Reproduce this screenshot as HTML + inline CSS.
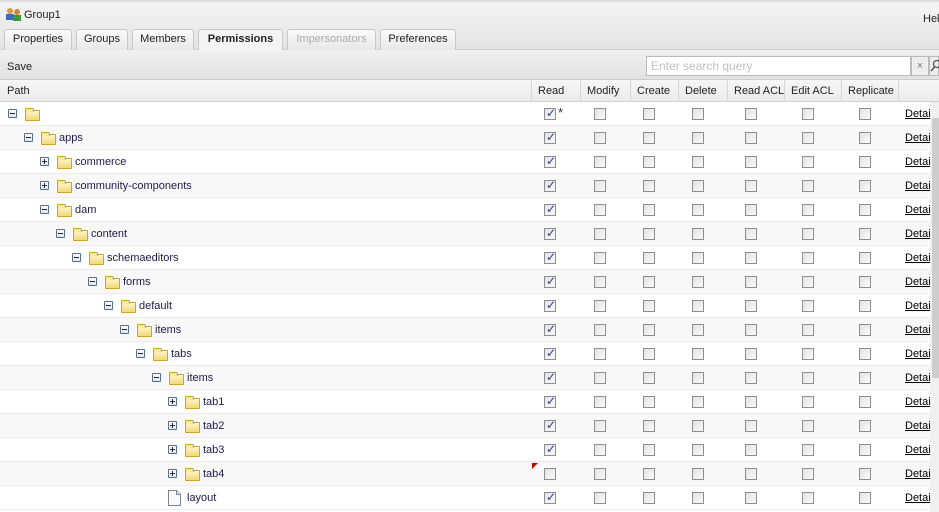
<!DOCTYPE html>
<html><head><meta charset="utf-8"><style>
*{box-sizing:border-box;margin:0;padding:0}
body{width:939px;height:512px;overflow:hidden;background:#fff;font-family:"Liberation Sans","DejaVu Sans",sans-serif;font-size:11px;color:#222;position:relative}
.abs{position:absolute}
#top{left:0;top:0;width:939px;height:50px;background:linear-gradient(#f4f4f4,#e4e4e4);border-top:2px solid #ddd;border-bottom:1px solid #d0d0d0}
.tab{position:absolute;top:29px;height:21px;border:1px solid #c8c8c8;border-bottom:none;border-radius:3px 3px 0 0;background:linear-gradient(#fafafa,#e8e8e8);text-align:center;line-height:19px;font-size:11px;color:#222}
#tb{left:0;top:50px;width:939px;height:30px;background:linear-gradient(#f0f0f0,#e2e2e2);border-bottom:1px solid #ccc}
#hdr{left:0;top:80px;width:939px;height:22px;background:linear-gradient(#f6f6f6,#ebebeb);border-bottom:1px solid #d0d0d0}
.hc{position:absolute;top:0;height:22px;line-height:22px;border-left:1px solid #d6d6d6;padding-left:6px;font-size:11px;color:#222}
.row{position:absolute;left:0;width:930px;height:24px;border-bottom:1px solid #ececec}
.row.g{background:#f8f8f8}
.ex{position:absolute;top:7px;width:9px;height:9px;border:1px solid #56708a;background:linear-gradient(#fff,#dfe6ee);border-radius:1px}
.ex:before{content:"";position:absolute;left:1px;top:3px;width:5px;height:1px;background:#223}
.ex.p:after{content:"";position:absolute;left:3px;top:1px;width:1px;height:5px;background:#223}
.fd{position:absolute;top:8px;width:15px;height:11px;border:1px solid #c9a23a;border-radius:1px;background:linear-gradient(#fff6c8,#f3d877)}
.fd:before{content:"";position:absolute;left:-1px;top:-3px;width:7px;height:3px;border:1px solid #c9a23a;border-bottom:none;border-radius:2px 2px 0 0;background:#fbeaa4}
.tx{position:absolute;top:6px;color:#1e1a4a;font-size:11px}
.cb{position:absolute;top:6px;width:12px;height:12px;border:1px solid #8e8e8e;background:linear-gradient(135deg,#e2e2e2,#fafafa)}
.ck:after{content:"✓";position:absolute;left:1px;top:-3px;font-size:12px;font-weight:bold;color:#2a3f8f}
.dt{position:absolute;left:905px;top:6px;text-decoration:underline;color:#000;font-size:11px}
</style></head><body>
<div id="top" class="abs"></div>
<svg class="abs" style="left:5px;top:7px" width="17" height="14"><circle cx="5" cy="4" r="3" fill="#d89a4a"/><rect x="1" y="7" width="8" height="6" fill="#3a6cc0"/><circle cx="12" cy="5" r="3" fill="#c98a40"/><rect x="8" y="8" width="8" height="6" fill="#3a9a3a"/></svg>
<div class="abs" style="left:24px;top:9px;font-size:11px">Group1</div>
<div class="abs" style="left:923px;top:13px;font-size:11px">Hel</div>
<div class="tab" style="left:4px;width:68px">Properties</div>
<div class="tab" style="left:76px;width:52px">Groups</div>
<div class="tab" style="left:132px;width:62px">Members</div>
<div class="tab" style="left:198px;width:85px;background:#f4f4f4;font-weight:bold;height:22px">Permissions</div>
<div class="tab" style="left:287px;width:89px;color:#aaa">Impersonators</div>
<div class="tab" style="left:380px;width:76px">Preferences</div>
<div id="tb" class="abs"></div>
<div class="abs" style="left:7px;top:61px">Save</div>
<div class="abs" style="left:646px;top:56px;width:265px;height:20px;border:1px solid #bbb;background:#fff;color:#c0c0c0;font-size:12px;padding:2px 4px">Enter search query</div>
<div class="abs" style="left:911px;top:56px;width:18px;height:20px;border:1px solid #bbb;background:#eee;text-align:center;color:#777;line-height:18px">×</div>
<div class="abs" style="left:929px;top:56px;width:10px;height:20px;border:1px solid #bbb;background:#eee"></div>
<svg class="abs" style="left:930px;top:59px" width="9" height="14"><circle cx="7" cy="5" r="3.5" fill="none" stroke="#555" stroke-width="1.3"/><line x1="4.5" y1="8" x2="1" y2="12" stroke="#555" stroke-width="1.6"/></svg>
<div id="hdr" class="abs">
<div class="hc" style="left:0;border:none;padding-left:7px">Path</div>
<div class="hc" style="left:531px">Read</div>
<div class="hc" style="left:580px">Modify</div>
<div class="hc" style="left:630px">Create</div>
<div class="hc" style="left:678px">Delete</div>
<div class="hc" style="left:727px">Read ACL</div>
<div class="hc" style="left:784px">Edit ACL</div>
<div class="hc" style="left:841px">Replicate</div>
<div class="hc" style="left:898px"></div>
</div>

<div class="row" style="top:102px"><i class="ex" style="left:8px"></i><i class="fd" style="left:25px"></i><i class="cb ck" style="left:544px"></i><span class="abs" style="left:558px;top:3px;font-size:13px;color:#334">*</span><i class="cb" style="left:594px"></i><i class="cb" style="left:643px"></i><i class="cb" style="left:692px"></i><i class="cb" style="left:745px"></i><i class="cb" style="left:802px"></i><i class="cb" style="left:859px"></i><u class="dt">Detai</u></div>
<div class="row g" style="top:126px"><i class="ex" style="left:24px"></i><i class="fd" style="left:41px"></i><span class="tx" style="left:59px">apps</span><i class="cb ck" style="left:544px"></i><i class="cb" style="left:594px"></i><i class="cb" style="left:643px"></i><i class="cb" style="left:692px"></i><i class="cb" style="left:745px"></i><i class="cb" style="left:802px"></i><i class="cb" style="left:859px"></i><u class="dt">Detai</u></div>
<div class="row" style="top:150px"><i class="ex p" style="left:40px"></i><i class="fd" style="left:57px"></i><span class="tx" style="left:75px">commerce</span><i class="cb ck" style="left:544px"></i><i class="cb" style="left:594px"></i><i class="cb" style="left:643px"></i><i class="cb" style="left:692px"></i><i class="cb" style="left:745px"></i><i class="cb" style="left:802px"></i><i class="cb" style="left:859px"></i><u class="dt">Detai</u></div>
<div class="row g" style="top:174px"><i class="ex p" style="left:40px"></i><i class="fd" style="left:57px"></i><span class="tx" style="left:75px">community-components</span><i class="cb ck" style="left:544px"></i><i class="cb" style="left:594px"></i><i class="cb" style="left:643px"></i><i class="cb" style="left:692px"></i><i class="cb" style="left:745px"></i><i class="cb" style="left:802px"></i><i class="cb" style="left:859px"></i><u class="dt">Detai</u></div>
<div class="row" style="top:198px"><i class="ex" style="left:40px"></i><i class="fd" style="left:57px"></i><span class="tx" style="left:75px">dam</span><i class="cb ck" style="left:544px"></i><i class="cb" style="left:594px"></i><i class="cb" style="left:643px"></i><i class="cb" style="left:692px"></i><i class="cb" style="left:745px"></i><i class="cb" style="left:802px"></i><i class="cb" style="left:859px"></i><u class="dt">Detai</u></div>
<div class="row g" style="top:222px"><i class="ex" style="left:56px"></i><i class="fd" style="left:73px"></i><span class="tx" style="left:91px">content</span><i class="cb ck" style="left:544px"></i><i class="cb" style="left:594px"></i><i class="cb" style="left:643px"></i><i class="cb" style="left:692px"></i><i class="cb" style="left:745px"></i><i class="cb" style="left:802px"></i><i class="cb" style="left:859px"></i><u class="dt">Detai</u></div>
<div class="row" style="top:246px"><i class="ex" style="left:72px"></i><i class="fd" style="left:89px"></i><span class="tx" style="left:107px">schemaeditors</span><i class="cb ck" style="left:544px"></i><i class="cb" style="left:594px"></i><i class="cb" style="left:643px"></i><i class="cb" style="left:692px"></i><i class="cb" style="left:745px"></i><i class="cb" style="left:802px"></i><i class="cb" style="left:859px"></i><u class="dt">Detai</u></div>
<div class="row g" style="top:270px"><i class="ex" style="left:88px"></i><i class="fd" style="left:105px"></i><span class="tx" style="left:123px">forms</span><i class="cb ck" style="left:544px"></i><i class="cb" style="left:594px"></i><i class="cb" style="left:643px"></i><i class="cb" style="left:692px"></i><i class="cb" style="left:745px"></i><i class="cb" style="left:802px"></i><i class="cb" style="left:859px"></i><u class="dt">Detai</u></div>
<div class="row" style="top:294px"><i class="ex" style="left:104px"></i><i class="fd" style="left:121px"></i><span class="tx" style="left:139px">default</span><i class="cb ck" style="left:544px"></i><i class="cb" style="left:594px"></i><i class="cb" style="left:643px"></i><i class="cb" style="left:692px"></i><i class="cb" style="left:745px"></i><i class="cb" style="left:802px"></i><i class="cb" style="left:859px"></i><u class="dt">Detai</u></div>
<div class="row g" style="top:318px"><i class="ex" style="left:120px"></i><i class="fd" style="left:137px"></i><span class="tx" style="left:155px">items</span><i class="cb ck" style="left:544px"></i><i class="cb" style="left:594px"></i><i class="cb" style="left:643px"></i><i class="cb" style="left:692px"></i><i class="cb" style="left:745px"></i><i class="cb" style="left:802px"></i><i class="cb" style="left:859px"></i><u class="dt">Detai</u></div>
<div class="row" style="top:342px"><i class="ex" style="left:136px"></i><i class="fd" style="left:153px"></i><span class="tx" style="left:171px">tabs</span><i class="cb ck" style="left:544px"></i><i class="cb" style="left:594px"></i><i class="cb" style="left:643px"></i><i class="cb" style="left:692px"></i><i class="cb" style="left:745px"></i><i class="cb" style="left:802px"></i><i class="cb" style="left:859px"></i><u class="dt">Detai</u></div>
<div class="row g" style="top:366px"><i class="ex" style="left:152px"></i><i class="fd" style="left:169px"></i><span class="tx" style="left:187px">items</span><i class="cb ck" style="left:544px"></i><i class="cb" style="left:594px"></i><i class="cb" style="left:643px"></i><i class="cb" style="left:692px"></i><i class="cb" style="left:745px"></i><i class="cb" style="left:802px"></i><i class="cb" style="left:859px"></i><u class="dt">Detai</u></div>
<div class="row" style="top:390px"><i class="ex p" style="left:168px"></i><i class="fd" style="left:185px"></i><span class="tx" style="left:203px">tab1</span><i class="cb ck" style="left:544px"></i><i class="cb" style="left:594px"></i><i class="cb" style="left:643px"></i><i class="cb" style="left:692px"></i><i class="cb" style="left:745px"></i><i class="cb" style="left:802px"></i><i class="cb" style="left:859px"></i><u class="dt">Detai</u></div>
<div class="row g" style="top:414px"><i class="ex p" style="left:168px"></i><i class="fd" style="left:185px"></i><span class="tx" style="left:203px">tab2</span><i class="cb ck" style="left:544px"></i><i class="cb" style="left:594px"></i><i class="cb" style="left:643px"></i><i class="cb" style="left:692px"></i><i class="cb" style="left:745px"></i><i class="cb" style="left:802px"></i><i class="cb" style="left:859px"></i><u class="dt">Detai</u></div>
<div class="row" style="top:438px"><i class="ex p" style="left:168px"></i><i class="fd" style="left:185px"></i><span class="tx" style="left:203px">tab3</span><i class="cb ck" style="left:544px"></i><i class="cb" style="left:594px"></i><i class="cb" style="left:643px"></i><i class="cb" style="left:692px"></i><i class="cb" style="left:745px"></i><i class="cb" style="left:802px"></i><i class="cb" style="left:859px"></i><u class="dt">Detai</u></div>
<div class="row g" style="top:462px"><i class="ex p" style="left:168px"></i><i class="fd" style="left:185px"></i><span class="tx" style="left:203px">tab4</span><svg class="abs" style="left:532px;top:1px" width="6" height="6"><polygon points="0,0 6,0 0,6" fill="#c00"/></svg><i class="cb" style="left:544px"></i><i class="cb" style="left:594px"></i><i class="cb" style="left:643px"></i><i class="cb" style="left:692px"></i><i class="cb" style="left:745px"></i><i class="cb" style="left:802px"></i><i class="cb" style="left:859px"></i><u class="dt">Detai</u></div>
<div class="row" style="top:486px"><svg class="abs" style="left:168px;top:4px" width="13" height="16"><path d="M0.5 0.5H8.5L12.5 4.5V15.5H0.5Z" fill="#fafafa" stroke="#7a8596"/><path d="M8.5 0.5V4.5H12.5" fill="#dde" stroke="#7a8596"/></svg><span class="tx" style="left:187px">layout</span><i class="cb ck" style="left:544px"></i><i class="cb" style="left:594px"></i><i class="cb" style="left:643px"></i><i class="cb" style="left:692px"></i><i class="cb" style="left:745px"></i><i class="cb" style="left:802px"></i><i class="cb" style="left:859px"></i><u class="dt">Detai</u></div>

<div class="abs" style="left:930px;top:102px;width:9px;height:410px;background:#f0f0f0"></div>
<div class="abs" style="left:932px;top:118px;width:7px;height:260px;background:#cdcdcd"></div>
</body></html>
